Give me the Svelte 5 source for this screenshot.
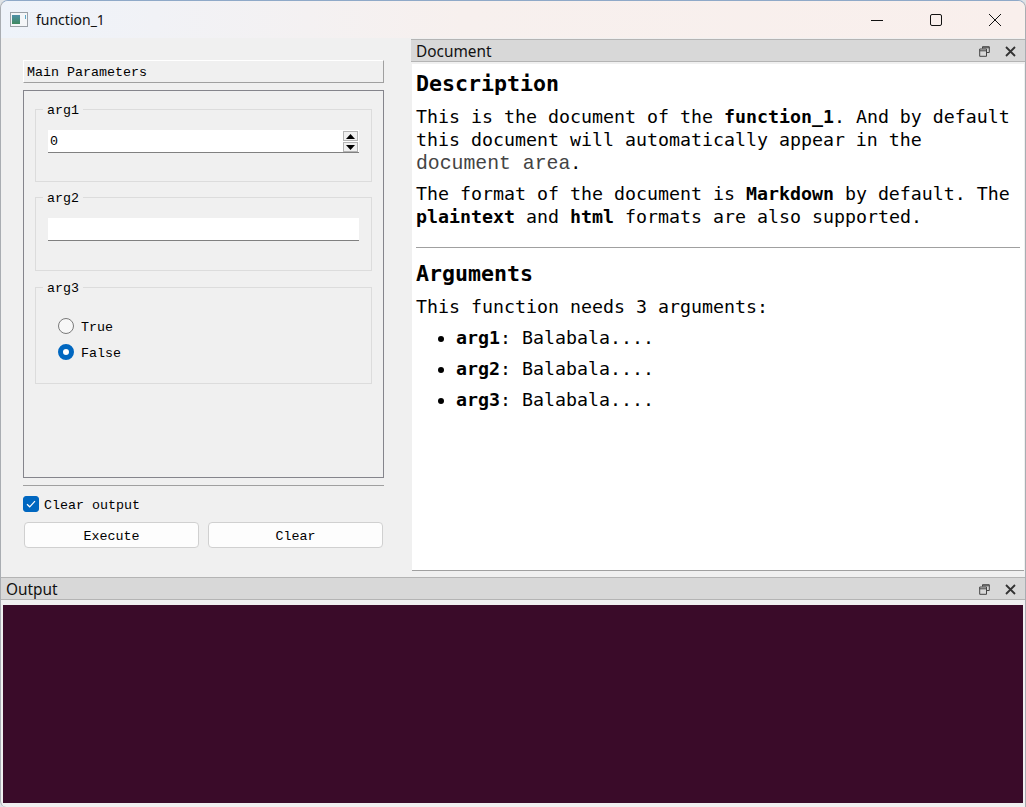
<script>
    let clearOutput = $state(true);
    let arg3 = $state('False');
    let arg1 = $state(0);
    const docArgs = ['arg1', 'arg2', 'arg3'];
</script>

<div class="window">
    <header class="titlebar">
        <svg class="appicon" width="18" height="15" viewBox="0 0 18 15">
            <rect x="0.5" y="0.5" width="17" height="14" fill="#f4f6f8" stroke="#9aa0a6" />
            <defs>
                <linearGradient id="pane" x1="0" y1="0" x2="0" y2="1">
                    <stop offset="0" stop-color="#4f8fa8" />
                    <stop offset="1" stop-color="#3f8a5f" />
                </linearGradient>
            </defs>
            <rect x="2" y="3" width="8" height="9" fill="url(#pane)" />
            <rect x="15" y="3" width="1" height="4" fill="#5ea8c8" />
        </svg>
        <span class="title">function_1</span>
        <div class="winbuttons">
            <svg width="14" height="14" viewBox="0 0 14 14"><path d="M1 7.5H13" stroke="#111" fill="none" /></svg>
            <svg width="14" height="14" viewBox="0 0 14 14"><rect x="1.5" y="1.5" width="11" height="11" rx="1.5" stroke="#111" fill="none" /></svg>
            <svg width="14" height="14" viewBox="0 0 14 14"><path d="M1 1L13 13M13 1L1 13" stroke="#111" fill="none" /></svg>
        </div>
    </header>

    <div class="top">
        <aside class="side">
            <div class="section-title">Main Parameters</div>
            <div class="frame">
                <fieldset class="first">
                    <legend>arg1</legend>
                    <div class="field">
                        <span>{arg1}</span>
                        <div class="spin">
                            <button aria-label="up" onclick={() => arg1++}><svg width="9" height="5" viewBox="0 0 9 5"><path d="M4.5 0L9 5H0Z" /></svg></button>
                            <button aria-label="down" onclick={() => arg1--}><svg width="9" height="5" viewBox="0 0 9 5"><path d="M0 0H9L4.5 5Z" /></svg></button>
                        </div>
                    </div>
                </fieldset>
                <fieldset class="second">
                    <legend>arg2</legend>
                    <div class="field"></div>
                </fieldset>
                <fieldset class="radios">
                    <legend>arg3</legend>
                    {#each ['True', 'False'] as opt}
                        <button class="radio" onclick={() => (arg3 = opt)}>
                            <span class={['dot', { on: arg3 === opt }]}></span><span class="label">{opt}</span>
                        </button>
                    {/each}
                </fieldset>
            </div>
            <div class="rule"></div>
            <button class="check" onclick={() => (clearOutput = !clearOutput)}>
                <span class={['box', { on: clearOutput }]}>
                    {#if clearOutput}
                        <svg width="10" height="8" viewBox="0 0 10 8"><path d="M1 4.2L3.7 6.8L9 1.2" stroke="#fff" stroke-width="1.2" fill="none" /></svg>
                    {/if}
                </span><span class="label">Clear output</span>
            </button>
            <div class="actions">
                <button>Execute</button>
                <button>Clear</button>
            </div>
        </aside>

        <section class="dock doc">
            <div class="dock-head">
                <span>Document</span>
                <div class="dock-icons">
                    <svg width="11" height="11" viewBox="0 0 11 11"><path d="M3.5 2.5V0.7H10.3V6.5H8M0.7 3H7.5V10.3H0.7ZM0.7 4.8H7.5M3.5 1.8H10.3" stroke="#444" fill="none" /></svg>
                    <svg width="11" height="11" viewBox="0 0 11 11"><path d="M1 1L10 10M10 1L1 10" stroke="#333" stroke-width="1.8" fill="none" /></svg>
                </div>
            </div>
            <div class="doc-body">
                <h2>Description</h2>
                <p>This is the document of the <b>function_1</b>. And by default this document will automatically appear in the <span class="alt">document area</span>.</p>
                <p>The format of the document is <b>Markdown</b> by default. The <b>plaintext</b> and <b>html</b> formats are also supported.</p>
                <hr />
                <h2>Arguments</h2>
                <p>This function needs 3 arguments:</p>
                <ul>
                    {#each docArgs as a}
                        <li><b>{a}</b>: Balabala....</li>
                    {/each}
                </ul>
            </div>
        </section>
    </div>

    <section class="dock output">
        <div class="dock-head">
            <span>Output</span>
            <div class="dock-icons">
                <svg width="11" height="11" viewBox="0 0 11 11"><path d="M3.5 2.5V0.7H10.3V6.5H8M0.7 3H7.5V10.3H0.7ZM0.7 4.8H7.5M3.5 1.8H10.3" stroke="#444" fill="none" /></svg>
                <svg width="11" height="11" viewBox="0 0 11 11"><path d="M1 1L10 10M10 1L1 10" stroke="#333" stroke-width="1.8" fill="none" /></svg>
            </div>
        </div>
        <div class="terminal"></div>
    </section>
</div>

<style>
    :global(body) {
        background: #dfe3e6;
    }

    .window {
        box-sizing: border-box;
        width: 1026px;
        height: 807px;
        display: flex;
        flex-direction: column;
        background: #f0f0f0;
        border: 1px solid #a9adb2;
        border-top-color: #8fa9c8;
        border-bottom: none;
        border-radius: 8px 8px 0 6px;
        overflow: hidden;
        color: #000;
        font-family: "Liberation Mono", monospace;
        font-size: 13.33px;
    }

    button {
        font: inherit;
        color: inherit;
        padding: 0;
        border: none;
        background: none;
    }

    .titlebar {
        flex: none;
        height: 37px;
        display: flex;
        align-items: center;
        padding-left: 9px;
        background: linear-gradient(90deg, #eef3fa 0%, #f7f0ee 45%, #f9efec 100%);
        font-family: "Noto Sans", sans-serif;
        font-size: 14px;
    }

    .appicon {
        margin-right: 8px;
    }

    .title {
        color: #111;
    }

    .winbuttons {
        margin-left: auto;
        display: flex;
        gap: 45px;
        padding-right: 23px;
    }

    .top {
        flex: none;
        height: 539px;
        display: flex;
    }

    .side {
        flex: none;
        width: 410px;
        box-sizing: border-box;
        padding: 22px 27px 0 22px;
    }

    .section-title {
        box-sizing: border-box;
        height: 23px;
        line-height: 23px;
        padding-left: 3px;
        border-top: 1px solid #fff;
        border-left: 1px solid #fff;
        border-right: 1px solid #a0a0a0;
        border-bottom: 1px solid #a0a0a0;
    }

    .frame {
        box-sizing: border-box;
        height: 388px;
        margin-top: 7px;
        padding: 9px 11px 0;
        border: 1px solid #85858c;
    }

    fieldset {
        box-sizing: border-box;
        margin: 0 0 6px;
        padding: 12px 12px 0;
        border: 1px solid #dcdcdc;
    }

    fieldset.first {
        height: 82px;
    }

    fieldset.second {
        height: 83px;
        margin-bottom: 7px;
    }

    fieldset.radios {
        height: 106px;
        margin: 0;
        padding: 22px 22px 0;
    }

    legend {
        margin-left: -5px;
        padding: 4px 4px 0;
        line-height: 14px;
    }

    .radios legend {
        margin-left: -15px;
    }

    .field {
        box-sizing: border-box;
        height: 23px;
        display: flex;
        align-items: center;
        padding: 1px 0 0 2px;
        background: #fff;
        border-bottom: 1px solid #808080;
    }

    .spin {
        margin-left: auto;
        margin-right: 1px;
        display: flex;
        flex-direction: column;
        gap: 1px;
    }

    .spin button {
        width: 15px;
        height: 10px;
        display: flex;
        align-items: center;
        justify-content: center;
        background: #f0f0f0;
        border: 1px solid #b4b4b4;
        box-sizing: border-box;
    }

    .radio {
        display: flex;
        align-items: center;
        gap: 7px;
        height: 16px;
        margin-bottom: 10px;
    }

    .label {
        padding-top: 2px;
    }

    .dot {
        box-sizing: border-box;
        width: 16px;
        height: 16px;
        border-radius: 50%;
        border: 1px solid #7a7a7a;
        background: #f7f7f7;
    }

    .dot.on {
        border: 5px solid #0067c0;
        background: #fff;
    }

    .rule {
        height: 1px;
        margin-top: 7px;
        background: #a0a0a0;
    }

    .check {
        display: flex;
        align-items: center;
        gap: 5px;
        height: 16px;
        margin-top: 10px;
    }

    .box {
        box-sizing: border-box;
        width: 16px;
        height: 16px;
        border-radius: 3px;
        display: flex;
        align-items: center;
        justify-content: center;
        border: 1px solid #7a7a7a;
    }

    .box.on {
        background: #0067c0;
        border-color: #0067c0;
    }

    .actions {
        display: grid;
        grid-template-columns: 1fr 1fr;
        gap: 9px;
        margin: 10px 1px 0;
    }

    .actions button {
        height: 26px;
        padding-top: 2px;
        background: #fdfdfd;
        border: 1px solid #d0d0d0;
        border-radius: 4px;
    }

    .dock {
        display: flex;
        flex-direction: column;
        min-width: 0;
    }

    .doc {
        flex: 1;
        padding-top: 1px;
    }

    .dock-head {
        flex: none;
        box-sizing: border-box;
        height: 23px;
        display: flex;
        align-items: center;
        padding: 2px 0 0 5px;
        background: #d8d8d8;
        border-top: 1px solid #b4b4b4;
        border-bottom: 1px solid #b4b4b4;
        font-family: "Noto Sans", sans-serif;
        font-size: 15.4px;
        color: #111;
    }

    .dock-icons {
        margin-left: auto;
        display: flex;
        gap: 15px;
        padding-right: 9px;
    }

    .doc-body {
        flex: 1;
        margin: 2px 1px 6px;
        padding: 7px 4px 0;
        background: #fff;
        border-bottom: 1px solid #a0a0a0;
        font-family: "DejaVu Sans Mono", monospace;
        font-size: 18.27px;
        line-height: 23px;
    }

    h2 {
        margin: 0 0 8px;
        font-size: 21.6px;
        line-height: 26px;
    }

    p {
        margin: 0 0 8px;
        width: 600px;
    }

    .alt {
        font-family: "Liberation Mono", monospace;
        font-size: 19.8px;
        line-height: 0;
        color: #444;
    }

    hr {
        margin: 19px 0 13px;
        border: none;
        height: 1px;
        background: #a0a0a0;
    }

    ul {
        margin: 0;
        padding-left: 40px;
    }

    li {
        margin-bottom: 8px;
    }

    .output {
        flex: 1;
        min-height: 0;
    }

    .terminal {
        flex: 1;
        margin: 5px 2px 4px 2px;
        background: #3a0b29;
    }
</style>
